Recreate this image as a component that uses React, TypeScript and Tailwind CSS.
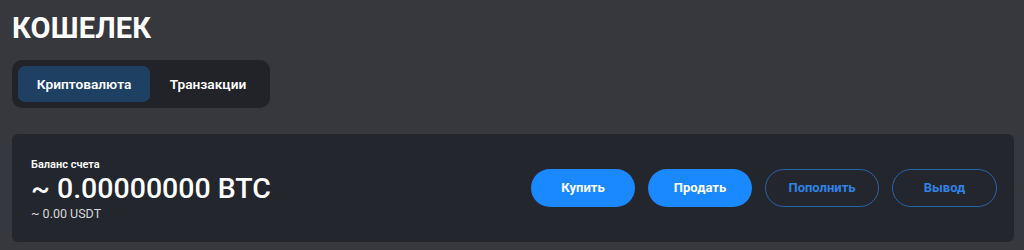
import React from "react";

const actions = [
  { label: "Купить", primary: true, w: "w-[104px]" },
  { label: "Продать", primary: true, w: "w-[104px]" },
  { label: "Пополнить", primary: false, w: "w-[114px]" },
  { label: "Вывод", primary: false, w: "w-[105px]" },
];

export default function App() {
  return (
    <div className="min-h-[250px] bg-[#36383d] pt-[12px] pr-[10px] pl-3 font-['Roboto',sans-serif] text-white">
      <h1 className="text-[29px] leading-[32px] font-bold tracking-[0.2px]">КОШЕЛЕК</h1>

      <div className="mt-[16px] inline-flex gap-[6px] rounded-[10px] bg-[#212329] p-[6px] pr-[10px]">
        <button className="h-9 w-[132px] rounded-[7px] bg-[#1e4163] text-[13.7px] font-semibold">
          Криптовалюта
        </button>
        <button className="h-9 w-[104px] text-[13.7px] font-semibold">Транзакции</button>
      </div>

      <div className="mt-[26px] flex h-[108px] items-center justify-between rounded-md bg-[#24262d] pr-[17px] pl-[19px]">
        <div className="pt-[2px]">
          <p className="text-[11px] leading-4 font-semibold">Баланс счета</p>
          <p className="mt-[1px] text-[28.5px] leading-[30px] font-medium">~ 0.00000000 BTC</p>
          <p className="mt-[2px] text-[12.5px] leading-4 text-[#d6d7da]">~ 0.00 USDT</p>
        </div>

        <div className="flex gap-[13px]">
          {actions.map((a) => (
            <button
              key={a.label}
              className={
                a.primary
                  ? `${a.w} h-[38px] rounded-full bg-[#1a88ff] text-[13px] font-bold text-white`
                  : `${a.w} h-[38px] rounded-full border border-[#2565ae] text-[13px] font-bold text-[#2f82e6]`
              }
            >
              {a.label}
            </button>
          ))}
        </div>
      </div>
    </div>
  );
}
